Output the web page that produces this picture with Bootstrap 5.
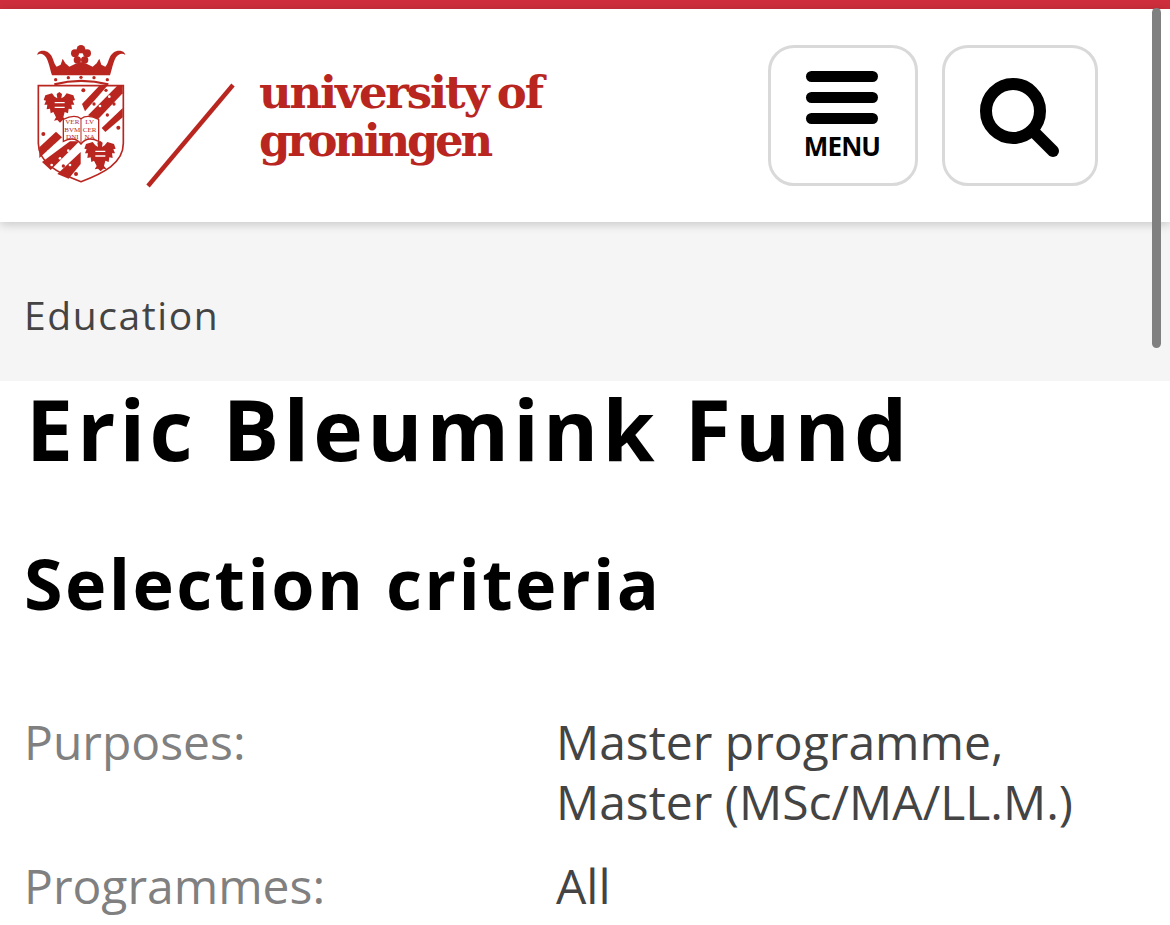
<!DOCTYPE html>
<html lang="en"><head><meta charset="utf-8"><title>Eric Bleumink Fund</title>
<link href="https://cdn.jsdelivr.net/npm/bootstrap@5.3.0/dist/css/bootstrap.min.css" rel="stylesheet">
<style>
html,body{height:925px;overflow:hidden;background:#fff}
body{font-family:"Open Sans",sans-serif;position:relative}
.topline{height:9px;background:#cf2f3c}
.site-head{height:213px;padding:0 72px 0 36px;box-shadow:0 2px 10px rgba(0,0,0,.2);position:relative;background:#fff}
.wordmark{font-family:"DejaVu Serif",serif;font-weight:700;color:#b9261f;font-size:45px;line-height:48px;margin-left:23px;margin-top:2px}
.wm-a{letter-spacing:-2.2px;word-spacing:-4px;white-space:nowrap}
.wm-b{letter-spacing:-3.3px}
.hdr-btn{height:141px;border:3px solid #d9d9d9;border-radius:26px;background:#fff;margin-top:-1px}
.menu-btn{width:150px;padding-right:2px}.search-btn{width:156px;padding-top:6px}
.bar{display:block;width:72px;height:11px;border-radius:6px;background:#000;margin-bottom:10px}
.menu-txt{font-size:26px;font-weight:700;line-height:26px;color:#000;letter-spacing:-.9px;margin-top:-1px}
.crumb-band{height:159px;background:#f5f5f5;padding:0 24px 40px;color:#444;font-size:39px;line-height:52px;letter-spacing:1.6px}
.main-title{font-size:84px;font-weight:700;letter-spacing:4.2px;line-height:96px;color:#000;margin:0 0 0 26px}
.sub-title{font-size:70px;font-weight:700;letter-spacing:2.4px;line-height:90px;color:#000;margin:61px 0 0 24px}
.crit{margin:84px 0 0 24px;font-size:48px;line-height:60px;color:#444}
.crit-label{width:532px;color:#808080;flex:none}
.crit-row{margin-bottom:24px}
.scroll-thumb{position:absolute;left:1152px;top:8px;width:9px;height:340px;border-radius:5px;background:#808080}
</style></head><body>
<div class="topline"></div>
<header class="site-head d-flex align-items-center justify-content-between">
  <div class="d-flex align-items-center">
    <svg width="200" height="149" viewBox="36 41 200 149" aria-label="University of Groningen crest">
      <defs>
        <g id="eagle-shape">
          <path d="M118 186 126 192 124 205 132 200 140 190 160 196 165 210 158 212 163 224 154 224 156 238 146 236 144 250 134 246 130 262 138 272 128 270 120 278 112 270 102 272 108 262 100 246 92 250 90 236 80 238 82 224 73 224 78 212 71 210 76 196 96 190 104 200 112 205 110 192Z"/>
          <path d="M104 218h30M104 232h30" stroke="#fff" stroke-width="4" fill="none"/>
        </g>
      </defs>
      <path d="M233 85 148 186" stroke="#b9261f" stroke-width="4.4" fill="none"/>
      <g transform="translate(20 30) scale(.33333)" fill="#b9261f">
        <g>
          <circle cx="183" cy="58" r="13"/><circle cx="165" cy="70" r="12"/><circle cx="201" cy="70" r="12"/><circle cx="172" cy="90" r="11"/><circle cx="194" cy="90" r="11"/>
          <circle cx="183" cy="76" r="6" fill="#fff"/>
          <path d="M52,75 C52,62 72,58 86,68 C100,78 100,100 110,110 L122,104 L128,86 L136,100 L148,110 L165,102 L183,96 L201,102 L218,110 L230,100 L238,86 L244,104 L256,110 C266,100 266,78 280,68 C294,58 314,62 316,75 C308,68 296,70 288,82 C280,95 276,118 270,136 L96,136 C90,118 86,95 78,82 C70,70 60,68 52,75 Z"/>
          <circle cx="107" cy="149" r="5"/><circle cx="145" cy="143" r="5"/><circle cx="183" cy="142" r="5"/><circle cx="222" cy="143" r="5"/><circle cx="262" cy="149" r="5"/>
          <path d="M103 163Q183 142 265 163" fill="none" stroke="#b9261f" stroke-width="7"/>
        </g>
        <path d="M55 167H310V340C310 400 250 430 183 455C116 430 55 400 55 340Z" fill="#fff" stroke="#b9261f" stroke-width="5"/>
        <path d="M186 222 238 167H262L195 244Z"/>
        <path d="M204 256 292 167H308V190L234 268Z"/>
        <path d="M245 294 308 234V262L256 306Z"/>
        <path d="M58 352 108 305 126 322 58 384Z"/>
        <path d="M66 396 150 334H178L92 420Z"/>
        <path d="M112 432 182 366V402L146 446Z"/>
        <g>
          <circle cx="190" cy="181" r="6"/><circle cx="295" cy="293" r="6"/><circle cx="70" cy="312" r="6"/><circle cx="168" cy="432" r="6"/>
          <circle cx="222" cy="222" r="5"/><circle cx="282" cy="222" r="5"/><circle cx="262" cy="255" r="5"/><circle cx="258" cy="181" r="5"/>
          <circle cx="105" cy="392" r="5"/><circle cx="130" cy="408" r="5"/>
        </g>
        <g fill="#fff">
          <circle cx="85" cy="365" r="4"/><circle cx="103" cy="348" r="4"/><circle cx="120" cy="385" r="4"/><circle cx="145" cy="362" r="4"/><circle cx="95" cy="405" r="4"/>
          <circle cx="150" cy="405" r="4"/><circle cx="240" cy="228" r="4"/><circle cx="268" cy="200" r="4"/>
        </g>
        <use href="#eagle-shape"/>
        <use href="#eagle-shape" transform="translate(122 146)"/>
        <path d="M130 268C150 258 170 256 183 266 196 256 216 258 236 268V334C216 324 196 324 183 342 170 324 150 324 130 334Z" fill="#fff" stroke="#b9261f" stroke-width="4"/>
        <path d="M183 266V342" stroke="#b9261f" stroke-width="3"/>
        <g font-family="Liberation Serif,serif" font-size="21" text-anchor="middle">
          <text x="157" y="283">VER</text><text x="157" y="305">BVM</text><text x="157" y="327">DNI</text>
          <text x="209" y="283">LV</text><text x="209" y="305">CER</text><text x="209" y="327">NA</text>
        </g>
      </g>
    </svg>
    <div class="wordmark"><div class="wm-a">university of</div><div class="wm-b">groningen</div></div>
  </div>
  <div class="d-flex gap-4">
    <div class="hdr-btn menu-btn d-flex flex-column align-items-center justify-content-center">
      <span class="bar"></span><span class="bar"></span><span class="bar"></span>
      <span class="menu-txt">MENU</span>
    </div>
    <div class="hdr-btn search-btn d-flex align-items-center justify-content-center">
      <svg width="80" height="80" viewBox="0 0 80 80"><circle cx="33" cy="33" r="27" fill="none" stroke="#000" stroke-width="12"/><path d="M55 55 73 73" stroke="#000" stroke-width="12" stroke-linecap="round"/></svg>
    </div>
  </div>
</header>
<div class="crumb-band d-flex align-items-end">Education</div>
<h1 class="main-title">Eric Bleumink Fund</h1>
<h2 class="sub-title">Selection criteria</h2>
<div class="crit">
  <div class="d-flex crit-row"><div class="crit-label">Purposes:</div><div>Master programme,<br>Master (MSc/MA/LL.M.)</div></div>
  <div class="d-flex crit-row"><div class="crit-label">Programmes:</div><div>All</div></div>
</div>
<div class="scroll-thumb"></div>
</body></html>
